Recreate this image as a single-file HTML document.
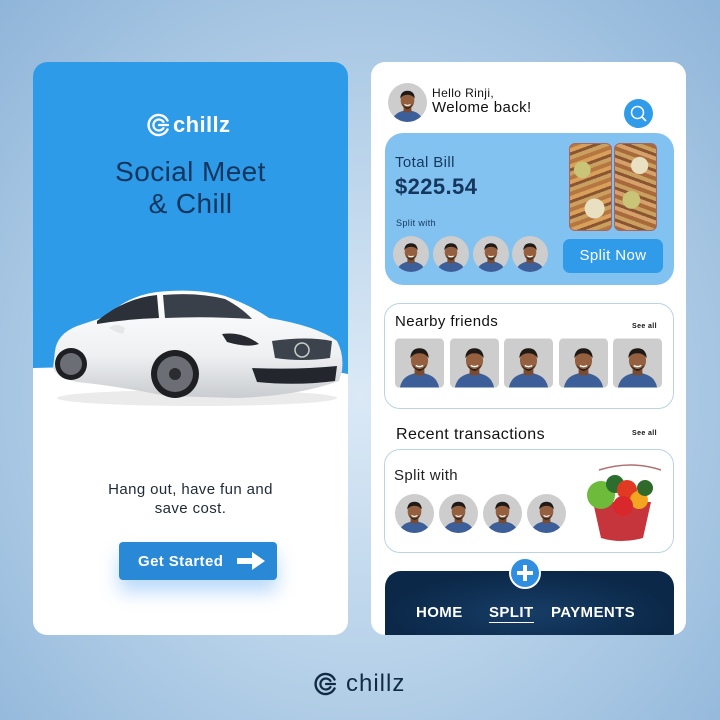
<!DOCTYPE html>
<html><head><meta charset="utf-8"><style>
*{margin:0;padding:0;box-sizing:border-box}
body{width:720px;height:720px;overflow:hidden;font-family:"Liberation Sans",sans-serif;letter-spacing:0.4px;background:radial-gradient(ellipse at 50% 55%,#dbe9f6 0%,#b9d3ea 45%,#8fb5d9 100%);position:relative}
.abs{position:absolute}
.card{position:absolute;top:62px;width:315px;height:573px;border-radius:14px;background:#fff;overflow:hidden}
.av{position:absolute;border-radius:50%;overflow:hidden}
.tile{position:absolute;border-radius:5px;overflow:hidden;width:49px;height:50px;top:338px}
</style></head><body>
<svg width="0" height="0" style="position:absolute"><defs>
<symbol id="p" viewBox="0 0 40 40"><rect width="40" height="40" fill="#cdcdcd"/><path d="M4 40 Q6 29 20 28 Q34 29 36 40Z" fill="#3d5f99"/><rect x="16" y="22" width="8" height="8" fill="#7a4a30"/><ellipse cx="20" cy="18" rx="7" ry="8.5" fill="#94603f"/><path d="M12.5 16 Q13 8 20 8 Q27 8 27.5 16 Q25 12 20 12 Q15 12 12.5 16Z" fill="#1f1a18"/><path d="M14 21 Q20 29 26 21 Q24 26 20 26.5 Q16 26 14 21Z" fill="#2a1f1a"/><path d="M17 22 Q20 24 23 22" stroke="#fff" stroke-width="1.2" fill="none"/></symbol>
<symbol id="logo" viewBox="0 0 24 24"><path d="M20.5 7.5 A10 10 0 1 0 20.5 16.5" fill="none" stroke="currentColor" stroke-width="2.4" stroke-linecap="round"/><path d="M16.5 9 A5.5 5.5 0 1 0 16.5 15" fill="none" stroke="currentColor" stroke-width="2.2" stroke-linecap="round"/><path d="M12 12 H21" stroke="currentColor" stroke-width="2.2" stroke-linecap="round"/></symbol>
<linearGradient id="cb" x1="0" y1="0" x2="0" y2="1"><stop offset="0" stop-color="#ffffff"/><stop offset=".6" stop-color="#eef0f2"/><stop offset="1" stop-color="#c9ccd0"/></linearGradient>
</defs></svg>

<!-- Left card -->
<div class="card" style="left:33px">
  <svg class="abs" style="left:0;top:0" width="315" height="320"><path d="M0 0H315V312 Q200 290 120 300 Q50 305 0 306Z" fill="#2e9be9"/></svg>
  <div class="abs" style="left:114px;top:50px;color:#fff;font-weight:bold;font-size:22px;display:flex;align-items:center;gap:2px"><svg width="24" height="24" style="color:#fff"><use href="#logo"/></svg>chillz</div>
  <div class="abs" style="left:0;width:315px;top:94px;text-align:center;color:#12365e;font-size:28px;line-height:32px">Social Meet<br>&amp; Chill</div>
  <!-- car -->
  <svg class="abs" style="left:14px;top:224px" width="300" height="125" viewBox="0 0 300 125">
    <ellipse cx="150" cy="112" rx="140" ry="8" fill="#ddd" opacity=".6"/>
    <path d="M8 65 Q10 48 30 40 L60 30 Q80 10 110 6 Q150 2 178 10 Q205 20 222 32 Q270 40 290 55 Q297 68 295 85 L292 95 Q250 110 190 112 L120 110 Q70 100 30 96 Q10 92 6 82Z" fill="url(#cb)"/>
    <path d="M50 35 Q78 12 110 9 L112 32 Q80 33 50 38Z" fill="#2c3038"/>
    <path d="M116 9 Q150 6 178 13 Q195 22 205 33 Q160 30 118 32Z" fill="#3a404a"/>
    <path d="M175 48 Q195 45 212 58 Q200 62 180 56Z" fill="#262a30"/>
    <path d="M225 55 Q260 50 285 55 L283 72 Q255 76 228 72Z" fill="#3d434c"/>
    <circle cx="255" cy="64" r="7" fill="none" stroke="#ccc" stroke-width="1.5"/>
    <path d="M205 82 Q250 84 290 80 L288 95 Q250 100 210 96Z" fill="#23272d"/>
    <circle cx="128" cy="88" r="24" fill="#1d1f23"/><circle cx="128" cy="88" r="18" fill="#6b6e74"/><circle cx="128" cy="88" r="6" fill="#2a2c30"/>
    <circle cx="24" cy="78" r="16" fill="#1d1f23"/><circle cx="24" cy="78" r="11" fill="#6b6e74"/>
    <path d="M62 42 Q70 36 78 42 L76 48 Q68 46 62 42Z" fill="#e6e7e9"/>
  </svg>
  <div class="abs" style="left:0;width:315px;top:418px;text-align:center;color:#1f2a36;font-size:15px;line-height:19px">Hang out, have fun and<br>save cost.</div>
  <div class="abs" style="left:86px;top:480px;width:158px;height:38px;border-radius:4px;background:#2a89d6;box-shadow:0 12px 18px rgba(60,150,240,.35);color:#fff;font-size:15px;font-weight:bold;display:flex;align-items:center;padding-left:19px">Get Started<svg style="margin-left:14px" width="28" height="18" viewBox="0 0 28 18"><path d="M0 6H15V0L28 9L15 18V12H0Z" fill="#fff"/></svg></div>
</div>

<!-- Right card -->
<div class="card" style="left:371px">
  <div class="av" style="left:17px;top:21px;width:39px;height:39px"><svg width="39" height="39"><use href="#p"/></svg></div>
  <div class="abs" style="left:61px;top:25px;color:#111;font-size:12px;line-height:12px">Hello Rinji,</div>
  <div class="abs" style="left:61px;top:38px;color:#111;font-size:15px;line-height:15px">Welome back!</div>
  <div class="abs" style="left:253px;top:37px;width:29px;height:29px;border-radius:50%;background:#2f9be9"><svg width="29" height="29"><circle cx="13.5" cy="13.5" r="6" fill="none" stroke="#fff" stroke-width="1.5"/><path d="M18 18L22 22" stroke="#fff" stroke-width="1.8"/></svg></div>
  <!-- bill -->
  <div class="abs" style="left:14px;top:71px;width:289px;height:152px;border-radius:18px;background:#82c2f1"></div>
  <div class="abs" style="left:24px;top:92px;color:#15375e;font-size:15px">Total Bill</div>
  <div class="abs" style="left:24px;top:112px;color:#15375e;font-size:22px;font-weight:bold">$225.54</div>
  <div class="abs" style="left:25px;top:156px;color:#15375e;font-size:9px">Split with</div>
  <div class="av" style="left:22px;top:174px;width:36px;height:36px"><svg width="36" height="36"><use href="#p"/></svg></div>
  <div class="av" style="left:62px;top:174px;width:36px;height:36px"><svg width="36" height="36"><use href="#p"/></svg></div>
  <div class="av" style="left:102px;top:174px;width:36px;height:36px"><svg width="36" height="36"><use href="#p"/></svg></div>
  <div class="av" style="left:141px;top:174px;width:36px;height:36px"><svg width="36" height="36"><use href="#p"/></svg></div>
  <div class="abs" style="left:198px;top:81px;width:43px;height:88px;border-radius:6px;background:radial-gradient(circle at 30% 30%,#c9c478 0 12%,transparent 13%),radial-gradient(circle at 60% 75%,#e8e0c0 0 14%,transparent 15%),repeating-linear-gradient(160deg,#b5773f 0 4px,#d8a05a 4px 8px,#8a5530 8px 11px,#c9a060 11px 15px);border:1px solid #a66"></div>
  <div class="abs" style="left:243px;top:81px;width:43px;height:88px;border-radius:6px;background:radial-gradient(circle at 60% 25%,#e8e0c0 0 12%,transparent 13%),radial-gradient(circle at 40% 65%,#c9c478 0 14%,transparent 15%),repeating-linear-gradient(20deg,#a86a3a 0 4px,#d6a06b 4px 8px,#8a5530 8px 11px,#c9a060 11px 15px);border:1px solid #a66"></div>
  <div class="abs" style="left:192px;top:177px;width:100px;height:34px;border-radius:7px;background:#2f9be9;color:#fff;font-size:15px;text-align:center;line-height:34px">Split Now</div>
  <!-- nearby -->
  <div class="abs" style="left:13px;top:241px;width:290px;height:106px;border-radius:16px;border:1px solid #bcd3e3"></div>
  <div class="abs" style="left:24px;top:251px;color:#111;font-size:15px">Nearby friends</div>
  <div class="abs" style="left:261px;top:261px;color:#111;font-size:7px;font-weight:bold">See all</div>
  <div class="tile" style="left:24px;top:276px"><svg width="49" height="50"><use href="#p"/></svg></div>
  <div class="tile" style="left:79px;top:276px"><svg width="49" height="50"><use href="#p"/></svg></div>
  <div class="tile" style="left:133px;top:276px"><svg width="49" height="50"><use href="#p"/></svg></div>
  <div class="tile" style="left:188px;top:276px"><svg width="49" height="50"><use href="#p"/></svg></div>
  <div class="tile" style="left:242px;top:276px"><svg width="49" height="50"><use href="#p"/></svg></div>
  <!-- recent -->
  <div class="abs" style="left:25px;top:364px;color:#111;font-size:16px">Recent transactions</div>
  <div class="abs" style="left:261px;top:368px;color:#111;font-size:7px;font-weight:bold">See all</div>
  <div class="abs" style="left:13px;top:387px;width:290px;height:104px;border-radius:16px;border:1px solid #bcd3e3"></div>
  <div class="abs" style="left:23px;top:405px;color:#222;font-size:15px">Split with</div>
  <div class="av" style="left:24px;top:432px;width:39px;height:39px"><svg width="39" height="39"><use href="#p"/></svg></div>
  <div class="av" style="left:68px;top:432px;width:39px;height:39px"><svg width="39" height="39"><use href="#p"/></svg></div>
  <div class="av" style="left:112px;top:432px;width:39px;height:39px"><svg width="39" height="39"><use href="#p"/></svg></div>
  <div class="av" style="left:156px;top:432px;width:39px;height:39px"><svg width="39" height="39"><use href="#p"/></svg></div>
  <svg class="abs" style="left:210px;top:398px" width="84" height="84" viewBox="0 0 84 84">
    <path d="M12 42 L70 42 L62 78 Q40 84 20 78Z" fill="#c7353c"/>
    <circle cx="20" cy="35" r="14" fill="#6cbb3a"/><circle cx="34" cy="24" r="9" fill="#2b6e2d"/>
    <circle cx="46" cy="30" r="10" fill="#e23a22"/><circle cx="58" cy="40" r="9" fill="#f3a520"/><circle cx="64" cy="28" r="8" fill="#2f6a2a"/><circle cx="42" cy="46" r="10" fill="#d8282b"/>
    <path d="M18 10 Q50 0 80 10" stroke="#b07070" stroke-width="1.5" fill="none"/>
  </svg>
  <!-- nav -->
  <div class="abs" style="left:14px;top:509px;width:289px;height:70px;border-radius:16px 16px 0 0;background:radial-gradient(ellipse at 50% 60%,#173d66,#0b2848 70%)"></div>
  <div class="abs" style="left:138px;top:495px;width:32px;height:32px;border-radius:50%;background:#2f8ee0;border:2px solid #fff"><svg width="28" height="28"><path d="M14 6V22M6 14H22" stroke="#fff" stroke-width="4"/></svg></div>
  <div class="abs" style="left:45px;top:542px;color:#fff;font-size:15px;font-weight:bold">HOME</div>
  <div class="abs" style="left:118px;top:542px;color:#fff;font-size:15px;font-weight:bold;border-bottom:1.5px solid #fff;padding-bottom:1px">SPLIT</div>
  <div class="abs" style="left:180px;top:542px;color:#fff;font-size:15px;font-weight:bold">PAYMENTS</div>
</div>

<div class="abs" style="left:314px;top:670px;color:#122a44;font-size:24px;letter-spacing:1px;display:flex;align-items:center;gap:8px"><svg width="24" height="24" style="color:#122a44"><use href="#logo"/></svg>chillz</div>
</body></html>
